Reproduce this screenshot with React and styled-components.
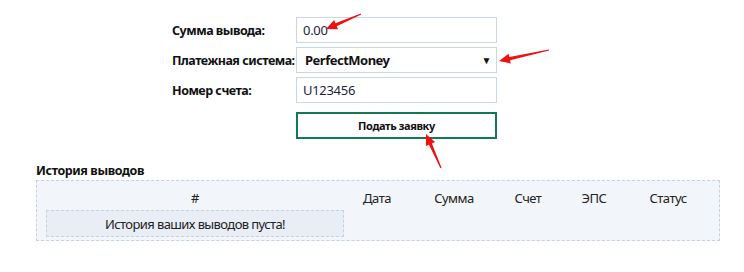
import React from 'react'
import styled, { createGlobalStyle } from 'styled-components'

const Global = createGlobalStyle`
  body {
    margin: 0;
    background: #fff;
    font-family: 'Noto Sans', 'Open Sans', sans-serif;
    color: #111;
  }
`

const Page = styled.div`
  position: relative;
  width: 744px;
  height: 272px;
  padding-top: 17px;
  box-sizing: border-box;
`

const Form = styled.div`
  display: grid;
  grid-template-columns: 124px 201px;
  row-gap: 4px;
  margin-left: 172px;
  align-items: center;
`

const Label = styled.div`
  font-size: 12.5px;
  font-weight: 700;
  letter-spacing: -0.5px;
  white-space: nowrap;
`

const Field = styled.div`
  height: 26px;
  box-sizing: border-box;
  border: 1px solid #c9d6e3;
  display: flex;
  align-items: center;
  justify-content: space-between;
  padding: 0 5px 0 ${p => (p.$select ? 8 : 6)}px;
  font-size: 13px;
  font-weight: ${p => (p.$select ? 700 : 400)};
  color: ${p => (p.$select ? '#111' : '#1c2340')};
  letter-spacing: ${p => (p.$select ? -0.5 : -0.3)}px;
`

const Caret = styled.span`
  font-size: 10px;
  color: #111;
`

const Button = styled.div`
  grid-column: 2;
  margin-top: 5px;
  height: 27px;
  box-sizing: border-box;
  border: 2px solid #117a55;
  display: flex;
  align-items: center;
  justify-content: center;
  font-size: 11px;
  font-weight: 700;
  letter-spacing: -0.4px;
`

const History = styled.div`
  margin: 23px 0 0 36px;
  width: 684px;
`

const Title = styled.div`
  font-size: 12.5px;
  font-weight: 700;
  letter-spacing: -0.4px;
  height: 17px;
  line-height: 17px;
  margin-bottom: 1px;
`

const Table = styled.div`
  border: 1px dashed #c5d3e0;
  background: #f2f5f9;
  padding: 0 12px 3px 9px;
  display: grid;
  grid-template-columns: 298px 66px 88px 60px 72px 76px;
`

const Th = styled.div`
  height: 29px;
  line-height: 35px;
  text-align: center;
  font-size: 13px;
  color: #222;
  letter-spacing: -0.5px;
`

const Empty = styled.div`
  grid-column: 1;
  height: 27px;
  box-sizing: border-box;
  border: 1px dashed #c5d3e0;
  background: #e9eef6;
  display: flex;
  align-items: center;
  justify-content: center;
  font-size: 13px;
  color: #222;
  letter-spacing: -0.6px;
`

const Arrow = styled.svg`
  position: absolute;
  overflow: visible;
  left: 0;
  top: 0;
  pointer-events: none;
`

const RedArrow = ({ x1, y1, x2, y2 }) => {
  const dx = x2 - x1
  const dy = y2 - y1
  const len = Math.hypot(dx, dy)
  const ux = dx / len
  const uy = dy / len
  const nx = -uy
  const ny = ux
  const hl = 11
  const hw = 5
  const bx = x2 - ux * hl
  const by = y2 - uy * hl
  const pts = [
    [x1 + nx * 0.6, y1 + ny * 0.6],
    [bx + nx * 1.6, by + ny * 1.6],
    [bx + nx * hw, by + ny * hw],
    [x2, y2],
    [bx - nx * hw, by - ny * hw],
    [bx - nx * 1.6, by - ny * 1.6],
    [x1 - nx * 0.6, y1 - ny * 0.6],
  ]
  return <polygon points={pts.map(p => p.join(',')).join(' ')} fill="#ee1111" />
}

const cols = ['#', 'Дата', 'Сумма', 'Счет', 'ЭПС', 'Статус']

export default function App() {
  return (
    <Page>
      <Global />
      <Form>
        <Label>Сумма вывода:</Label>
        <Field>0.00</Field>
        <Label>Платежная система:</Label>
        <Field $select>
          PerfectMoney
          <Caret>▼</Caret>
        </Field>
        <Label>Номер счета:</Label>
        <Field>U123456</Field>
        <Button>Подать заявку</Button>
      </Form>
      <History>
        <Title>История выводов</Title>
        <Table>
          {cols.map(c => (
            <Th key={c}>{c}</Th>
          ))}
          <Empty>История ваших выводов пуста!</Empty>
        </Table>
      </History>
      <Arrow width="744" height="272">
        <RedArrow x1={361} y1={14} x2={326} y2={29} />
        <RedArrow x1={549} y1={50} x2={499} y2={61} />
        <RedArrow x1={441} y1={168} x2={426} y2={134} />
      </Arrow>
    </Page>
  )
}
